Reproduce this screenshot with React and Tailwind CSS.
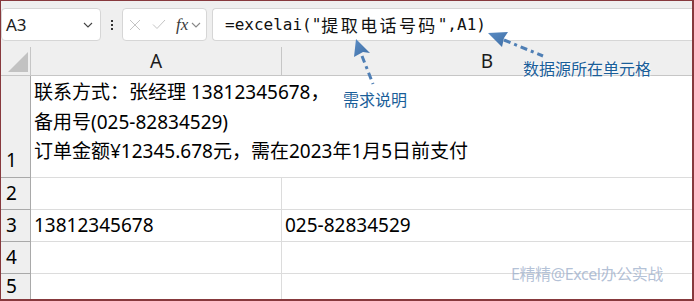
const cellFont = { fontFamily: '"Noto Sans", "Noto Sans CJK SC", sans-serif' }

const rows = [
  { n: '2', a: '', b: '', h: 'h-[32px]' },
  { n: '3', a: '13812345678', b: '025-82834529', h: 'h-[32px]' },
  { n: '4', a: '', b: '', h: 'h-[32px]' },
  { n: '5', a: '', b: '', h: 'h-[25px]' },
]

function Chevron({ className }) {
  return (
    <svg className={className} width="10" height="6" viewBox="0 0 10 6" fill="none">
      <path d="M1 1l4 4 4-4" stroke="currentColor" strokeWidth="1.1" />
    </svg>
  )
}

function Toolbar() {
  return (
    <div className="flex h-[46px] items-start bg-[#efefef] pt-[7px]">
      <div className="flex h-[33px] w-[100px] items-center rounded-[4px] border border-[#d6d6d6] bg-white pl-[4px] pr-[7px]">
        <span className="flex-1 text-[17px] text-[#1b1b1b]" style={{ fontFamily: '"Noto Sans", sans-serif' }}>A3</span>
        <Chevron className="text-[#444]" />
      </div>
      <div className="flex h-[33px] w-[21px] flex-col items-center justify-center gap-[2px]">
        <span className="h-[2px] w-[2px] bg-[#333]" />
        <span className="h-[2px] w-[2px] bg-[#333]" />
        <span className="h-[2px] w-[2px] bg-[#333]" />
      </div>
      <div className="flex h-[33px] w-[85px] items-center rounded-[4px] border border-[#d6d6d6] bg-white pl-[6px]">
        <svg width="12" height="12" viewBox="0 0 12 12" className="text-[#c4c4c4]">
          <path d="M1 1l10 10M11 1L1 11" stroke="currentColor" strokeWidth="1" />
        </svg>
        <svg width="14" height="11" viewBox="0 0 14 11" className="ml-[11px] text-[#c4c4c4]">
          <path d="M1 5.5l4 4L13 1" stroke="currentColor" strokeWidth="1" fill="none" />
        </svg>
        <span className="ml-[10px] text-[17px] italic text-[#3a3a3a]" style={{ fontFamily: '"Liberation Serif", serif' }}>fx</span>
        <Chevron className="ml-[3px] text-[#888]" />
      </div>
      <div className="ml-[5px] flex h-[33px] flex-1 items-center rounded-l-[4px] border border-r-0 border-[#d6d6d6] bg-white pl-[12px] text-[16px] text-[#111]" style={{ fontFamily: '"DejaVu Sans Mono", monospace' }}>
        <span className="whitespace-pre">=excelai("</span>
        <span className="text-[17px] tracking-[2.4px]" style={{ fontFamily: '"Noto Sans CJK SC", sans-serif' }}>提取电话号码</span>
        <span className="whitespace-pre">",A1)</span>
      </div>
    </div>
  )
}

function Overlay() {
  return (
    <>
      <svg className="pointer-events-none absolute left-0 top-0" width="694" height="301">
        <defs>
          <linearGradient id="ah" x1="0" y1="0" x2="1" y2="1">
            <stop offset="0" stopColor="#5b8cc4" />
            <stop offset="1" stopColor="#3f6fa6" />
          </linearGradient>
        </defs>
        <path d="M361 55 L372 83" stroke="#4f7fb5" strokeWidth="3" strokeDasharray="7 4 3 4" />
        <path d="M355 38 L369 52 L362 51 L353 56 Z" fill="url(#ah)" />
        <path d="M503 39 L542 55" stroke="#4f7fb5" strokeWidth="3" strokeDasharray="7 4 3 4" />
        <path d="M487 32 L507 31 L503 37 L501 46 Z" fill="url(#ah)" />
      </svg>
      <span className="absolute left-[342px] top-[86px] text-[16px] leading-[24px] text-[#1a5e99]" style={{ fontFamily: '"Noto Sans CJK SC", sans-serif', textShadow: '0 0 2px #fff, 0 0 3px #fff' }}>需求说明</span>
      <span className="absolute left-[522px] top-[55px] text-[16px] leading-[24px] text-[#1a5e99]" style={{ fontFamily: '"Noto Sans CJK SC", sans-serif', textShadow: '0 0 2px #fff, 0 0 3px #fff' }}>数据源所在单元格</span>
      <span className="absolute left-[510px] top-[262px] text-[16px] leading-[22px] tracking-[-0.4px] text-[#9fb1cc]/80" style={{ fontFamily: '"Noto Sans", "Noto Sans CJK SC", sans-serif' }}>E精精@Excel办公实战</span>
    </>
  )
}

export default function App() {
  return (
    <div className="relative h-[301px] w-[694px] overflow-hidden border-b-2 border-l border-r-2 border-t border-[#87393d] bg-white text-black">
      <Toolbar />
      <div className="grid grid-cols-[30px_251px_1fr] text-[19px]" style={cellFont}>
        {/* header row */}
        <div className="relative h-[29px] border-b border-r border-[#c6c6c6] bg-[#efefef]">
          <svg className="absolute left-[7px] top-[5px]" width="20" height="20" viewBox="0 0 20 20">
            <polygon points="20,0 20,20 0,20" fill="#c2c2c2" />
          </svg>
        </div>
        <div className="flex h-[29px] items-center justify-center border-b border-r border-[#c6c6c6] bg-[#efefef] text-[#1b1b1b]">A</div>
        <div className="flex h-[29px] items-center justify-center border-b border-[#c6c6c6] bg-[#efefef] text-[#1b1b1b]">B</div>

        {/* row 1 */}
        <div className="flex h-[102px] items-end border-b border-r border-[#a9a9a9] bg-[#efefef] pb-[3px] pl-[5px]">1</div>
        <div className="col-span-2 h-[102px] whitespace-pre border-b border-[#dcdcdc] pl-[3px] pt-[2px] leading-[29.5px]">
          <div>联系方式：张经理 13812345678，</div>
          <div>备用号(025-82834529)</div>
          <div>订单金额¥12345.678元，需在2023年1月5日前支付</div>
        </div>

        {rows.map((r) => (
          <div key={r.n} className="contents">
            <div className={`flex ${r.h} items-center border-b border-r border-[#a9a9a9] bg-[#efefef] pl-[5px] ${r.n === '5' ? 'border-b-0' : ''}`}>{r.n}</div>
            <div className={`flex ${r.h} items-center border-b border-r border-[#dcdcdc] pl-[3px] ${r.n === '5' ? 'border-b-0' : ''}`}>{r.a}</div>
            <div className={`flex ${r.h} items-center border-b border-[#dcdcdc] pl-[3px] ${r.n === '5' ? 'border-b-0' : ''}`}>{r.b}</div>
          </div>
        ))}
      </div>
      <Overlay />
    </div>
  )
}
